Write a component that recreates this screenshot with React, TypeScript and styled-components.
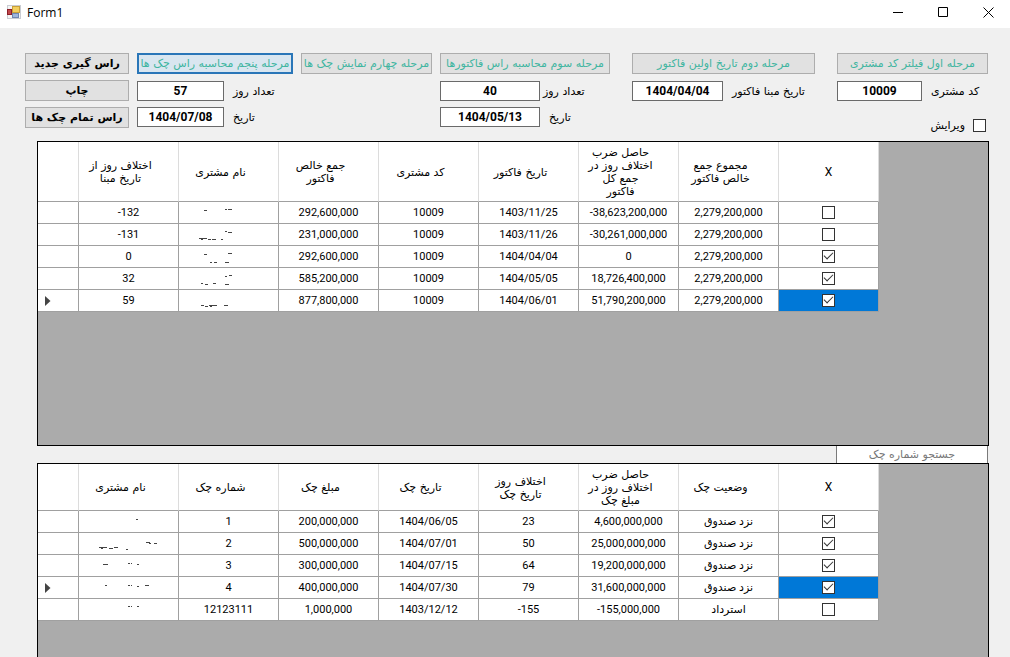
import React from "react";
import styled, { createGlobalStyle, css } from "styled-components";

const persian = `"DejaVu Sans", sans-serif`;
const latin = `Roboto, "DejaVu Sans", sans-serif`;

const GlobalStyle = createGlobalStyle`
  *, *::before, *::after { box-sizing: border-box; }
  body {
    margin: 0;
    background: #f0f0f0;
    color: #000;
    font: 11px/13px ${persian};
  }
`;

const Window = styled.div`
  display: flex;
  flex-direction: column;
  min-height: 100vh;
`;

const TitleBar = styled.header`
  display: flex;
  align-items: center;
  height: 28px;
  padding: 0 16px 4px 7px;
  background: #fff;
`;

const Title = styled.h1`
  flex: 1;
  margin: 0 0 0 6px;
  padding-top: 2px;
  font: 400 12px/16px "Open Sans", sans-serif;
`;

const WindowButtons = styled.div`
  display: flex;
  gap: 34px;
`;

const WindowButton = styled.button`
  display: flex;
  width: 11px;
  height: 11px;
  padding: 0;
  border: 0;
  background: none;
`;

const Toolbar = styled.section`
  display: grid;
  grid-template-columns:
    minmax(0, 104fr) minmax(0, 156fr) minmax(0, 131fr)
    minmax(0, 170fr) minmax(0, 197fr) minmax(0, 165fr);
  column-gap: 8px;
  height: 113px;
  padding: 25px 22px 0 25px;
`;

const Group = styled.div<{ $indent?: boolean }>`
  display: flex;
  flex-direction: column;
  gap: 6px;
  padding-left: ${(p) => (p.$indent ? 14 : 0)}px;
`;

const buttonBase = css`
  width: 100%;
  height: 21px;
  padding: 0;
  border: 1px solid #adadad;
  background: #e1e1e1;
  white-space: nowrap;
`;

const ActionButton = styled.button`
  ${buttonBase}
  font: 700 11px/13px ${persian};
  color: #000;
`;

const StepButton = styled.button<{ $active?: boolean }>`
  ${buttonBase}
  margin-bottom: 1px;
  font: 400 11px/13px ${persian};
  color: #3fb5a0;
  ${(p) =>
    p.$active &&
    css`
      border: 2px solid #2a76b8;
      background: #d9e6f0;
    `}
`;

const Field = styled.div<{ $gap: number }>`
  display: flex;
  align-items: center;
  gap: ${(p) => p.$gap}px;
  white-space: nowrap;
`;

const TextBox = styled.input<{ $width: number }>`
  width: ${(p) => p.$width}px;
  height: 20px;
  padding: 0;
  border: 1px solid #6a6a6a;
  background: #fff;
  font: 700 12px/16px ${latin};
  text-align: center;
`;

const EditRow = styled.div`
  display: flex;
  align-items: center;
  justify-content: flex-end;
  gap: 8px;
  padding: 12px 2px 0 0;
`;

const CheckBox = styled.input.attrs({ type: "checkbox" })`
  appearance: none;
  display: inline-grid;
  place-items: center;
  width: 13px;
  height: 13px;
  margin: 0;
  border: 1px solid #333;
  background: #fff;
  vertical-align: middle;

  &:checked::after {
    content: "";
    width: 5px;
    height: 9px;
    margin-top: -4px;
    border: solid #333;
    border-width: 0 1px 1px 0;
    transform: rotate(45deg);
  }
`;

const Panel = styled.section<{ $grow?: boolean }>`
  margin: 0 21px 0 37px;
  border: 1px solid #000;
  background: #ababab;
  overflow: hidden;
  ${(p) =>
    p.$grow
      ? css`
          flex: 1;
          border-bottom: 0;
        `
      : css`
          min-height: 305px;
        `}
`;

const Table = styled.table`
  border-collapse: separate;
  border-spacing: 0;
  table-layout: fixed;
  width: 841px;
`;

const RowHeadCol = styled.col`
  width: 41px;
`;

const HeadCell = styled.th<{ $height: number; $plain?: boolean }>`
  height: ${(p) => p.$height}px;
  padding: 1px ${(p) => (p.$plain ? 0 : 18)}px 0 0;
  border-right: 1px solid #dcdcdc;
  border-bottom: 1px solid #a0a0a0;
  background: #fff;
  font: ${(p) => (p.$plain ? `400 12px/13px ${latin}` : `400 11px/13px ${persian}`)};
  white-space: nowrap;
`;

const Cell = styled.td<{ $selected?: boolean }>`
  height: 22px;
  padding: 0;
  border-right: 1px solid #a0a0a0;
  border-bottom: 1px solid #a0a0a0;
  background: ${(p) => (p.$selected ? "#0078d7" : "#fff")};
  font: 400 11px/13px ${latin};
  text-align: center;
  white-space: nowrap;

  & > svg {
    display: block;
  }
`;

const Marker = styled.svg`
  margin-left: 7px;
`;

const SearchBar = styled.div`
  display: flex;
  justify-content: flex-end;
  height: 17px;
  margin: 0 22px 0 37px;
`;

const SearchBox = styled.input`
  width: 152px;
  height: 17px;
  padding: 0;
  border: 1px solid #7a7a7a;
  border-width: 0 1px 0 1px;
  background: #fff;
  font: 400 11px/13px ${persian};
  text-align: center;

  &::placeholder {
    color: #777;
    opacity: 1;
  }
`;

type Dash = [x: number, y: number, width: number];

type RowData = {
  cells: (string | Dash[])[];
  checked: boolean;
  current?: boolean;
};

const invoiceHeads = [
  ["اختلاف روز از", "تاریخ مبنا"],
  ["نام مشتری"],
  ["جمع خالص", "فاکتور"],
  ["کد مشتری"],
  ["تاریخ فاکتور"],
  ["حاصل ضرب", "اختلاف روز در", "جمع کل", "فاکتور"],
  ["مجموع جمع", "خالص فاکتور"],
];

const invoiceRows: RowData[] = [
  {
    cells: ["-132", [[25, 8, 3], [46, 7, 2], [49, 7, 4]], "292,600,000", "10009", "1403/11/25", "-38,623,200,000", "2,279,200,000"],
    checked: false,
  },
  {
    cells: ["-131", [[20, 14, 8], [22, 15, 2], [29, 15, 3], [33, 15, 4], [42, 15, 2], [46, 7, 2], [49, 8, 4]], "231,000,000", "10009", "1403/11/26", "-30,261,000,000", "2,279,200,000"],
    checked: false,
  },
  {
    cells: ["0", [[25, 8, 3], [31, 16, 2], [35, 16, 3], [46, 16, 4], [49, 7, 4]], "292,600,000", "10009", "1404/04/04", "0", "2,279,200,000"],
    checked: true,
  },
  {
    cells: ["32", [[22, 15, 2], [26, 16, 3], [34, 15, 3], [46, 16, 4], [46, 8, 2], [50, 7, 3]], "585,200,000", "10009", "1404/05/05", "18,726,400,000", "2,279,200,000"],
    checked: true,
  },
  {
    cells: ["59", [[22, 15, 3], [26, 16, 3], [30, 15, 4], [34, 15, 4], [31, 16, 2], [45, 15, 4]], "877,800,000", "10009", "1404/06/01", "51,790,200,000", "2,279,200,000"],
    checked: true,
    current: true,
  },
];

const chequeHeads = [
  ["نام مشتری"],
  ["شماره چک"],
  ["مبلغ چک"],
  ["تاریخ چک"],
  ["اختلاف روز", "تاریخ چک"],
  ["حاصل ضرب", "اختلاف روز در", "مبلغ چک"],
  ["وضعیت چک"],
];

const chequeRows: RowData[] = [
  {
    cells: [[[57, 8, 2]], "1", "200,000,000", "1404/06/05", "23", "4,600,000,000", "نزد صندوق"],
    checked: true,
  },
  {
    cells: [[[20, 14, 8], [22, 15, 2], [30, 15, 4], [35, 14, 4], [47, 16, 2], [67, 9, 4], [70, 10, 2], [75, 10, 3]], "2", "500,000,000", "1404/07/01", "50", "25,000,000,000", "نزد صندوق"],
    checked: true,
  },
  {
    cells: [[[24, 9, 5], [49, 8, 2], [52, 8, 1], [58, 9, 2]], "3", "300,000,000", "1404/07/15", "64", "19,200,000,000", "نزد صندوق"],
    checked: true,
  },
  {
    cells: [[[26, 8, 2], [49, 8, 2], [52, 8, 1], [58, 9, 2], [66, 8, 4]], "4", "400,000,000", "1404/07/30", "79", "31,600,000,000", "نزد صندوق"],
    checked: true,
    current: true,
  },
  {
    cells: [[[49, 7, 2], [52, 7, 1], [58, 7, 2]], "12123111", "1,000,000", "1403/12/12", "-155", "-155,000,000", "استرداد"],
    checked: false,
  },
];

function FormIcon() {
  return (
    <svg width="14" height="14" viewBox="0 0 14 14" aria-hidden="true">
      <rect x=".5" y=".5" width="13" height="13" fill="#f4f4f4" stroke="#c9ccd2" />
      <rect x="5.5" y="1.5" width="7" height="6" fill="#f3cf5e" stroke="#c9a03a" />
      <rect x=".5" y="4.5" width="4" height="5" fill="#c0474b" stroke="#8c1f28" />
      <rect x="5.5" y="8.5" width="6" height="4" fill="#9fb6dc" stroke="#6f86b0" />
    </svg>
  );
}

function DataTable({ heads, rows, headHeight, label }: { heads: string[][]; rows: RowData[]; headHeight: number; label: string }) {
  return (
    <Table aria-label={label}>
      <colgroup>
        <RowHeadCol />
        {heads.map((_, i) => (
          <col key={i} />
        ))}
        <col />
      </colgroup>
      <thead>
        <tr>
          <HeadCell $height={headHeight} />
          {heads.map((lines, i) => (
            <HeadCell key={i} $height={headHeight} dir="rtl" scope="col">
              {lines.map((line, n) => (
                <React.Fragment key={line}>
                  {n > 0 && <br />}
                  {line}
                </React.Fragment>
              ))}
            </HeadCell>
          ))}
          <HeadCell $height={headHeight} $plain scope="col">
            X
          </HeadCell>
        </tr>
      </thead>
      <tbody>
        {rows.map((row, r) => (
          <tr key={r}>
            <Cell>
              {row.current && (
                <Marker width="6" height="10" viewBox="0 0 6 10" aria-hidden="true">
                  <path d="M0 0 5.5 5 0 10Z" fill="#444" />
                </Marker>
              )}
            </Cell>
            {row.cells.map((cell, c) => (
              <Cell key={c}>
                {typeof cell === "string" ? (
                  cell
                ) : (
                  <svg width="99" height="21" viewBox="0 0 99 21" aria-hidden="true">
                    {cell.map(([x, y, w], d) => (
                      <rect key={d} x={x} y={y} width={w} height="1" fill="#444" />
                    ))}
                  </svg>
                )}
              </Cell>
            ))}
            <Cell $selected={row.current}>
              <CheckBox defaultChecked={row.checked} aria-label={`X ${r + 1}`} />
            </Cell>
          </tr>
        ))}
      </tbody>
    </Table>
  );
}

function LabeledField({ id, label, value, width, gap = 9 }: { id: string; label: string; value: string; width: number; gap?: number }) {
  return (
    <Field $gap={gap}>
      <TextBox id={id} defaultValue={value} $width={width} />
      <label htmlFor={id} dir="rtl">
        {label}
      </label>
    </Field>
  );
}

export default function App() {
  return (
    <Window>
      <GlobalStyle />
      <TitleBar>
        <FormIcon />
        <Title>Form1</Title>
        <WindowButtons>
          <WindowButton aria-label="Minimize">
            <svg width="11" height="11" viewBox="0 0 11 11">
              <path d="M0 5.5h10" stroke="#000" />
            </svg>
          </WindowButton>
          <WindowButton aria-label="Maximize">
            <svg width="11" height="11" viewBox="0 0 11 11">
              <path d="M.5.5h9v9h-9z" fill="none" stroke="#000" />
            </svg>
          </WindowButton>
          <WindowButton aria-label="Close">
            <svg width="11" height="11" viewBox="0 0 11 11">
              <path d="m.5.5 10 10m0-10-10 10" stroke="#000" />
            </svg>
          </WindowButton>
        </WindowButtons>
      </TitleBar>

      <Toolbar>
        <Group>
          <ActionButton dir="rtl">راس گیری جدید</ActionButton>
          <ActionButton dir="rtl">چاپ</ActionButton>
          <ActionButton dir="rtl">راس تمام چک ها</ActionButton>
        </Group>
        <Group>
          <StepButton $active dir="rtl">مرحله پنجم محاسبه راس چک ها</StepButton>
          <LabeledField id="cheque-days" label="تعداد روز" value="57" width={87} />
          <LabeledField id="cheque-date" label="تاریخ" value="1404/07/08" width={87} />
        </Group>
        <Group>
          <StepButton dir="rtl">مرحله چهارم نمایش چک ها</StepButton>
        </Group>
        <Group>
          <StepButton dir="rtl">مرحله سوم محاسبه راس فاکتورها</StepButton>
          <LabeledField id="invoice-days" label="تعداد روز" value="40" width={100} gap={3} />
          <LabeledField id="invoice-date" label="تاریخ" value="1404/05/13" width={100} />
        </Group>
        <Group $indent>
          <StepButton dir="rtl">مرحله دوم تاریخ اولین فاکتور</StepButton>
          <LabeledField id="base-date" label="تاریخ مبنا فاکتور" value="1404/04/04" width={91} />
        </Group>
        <Group $indent>
          <StepButton dir="rtl">مرحله اول فیلتر کد مشتری</StepButton>
          <LabeledField id="customer-code" label="کد مشتری" value="10009" width={85} />
          <EditRow>
            <label htmlFor="edit" dir="rtl">
              ویرایش
            </label>
            <CheckBox id="edit" />
          </EditRow>
        </Group>
      </Toolbar>

      <Panel>
        <DataTable label="فاکتورها" heads={invoiceHeads} rows={invoiceRows} headHeight={60} />
      </Panel>
      <SearchBar>
        <SearchBox dir="rtl" placeholder="جستجو شماره چک" aria-label="جستجو شماره چک" />
      </SearchBar>
      <Panel $grow>
        <DataTable label="چک ها" heads={chequeHeads} rows={chequeRows} headHeight={47} />
      </Panel>
    </Window>
  );
}
